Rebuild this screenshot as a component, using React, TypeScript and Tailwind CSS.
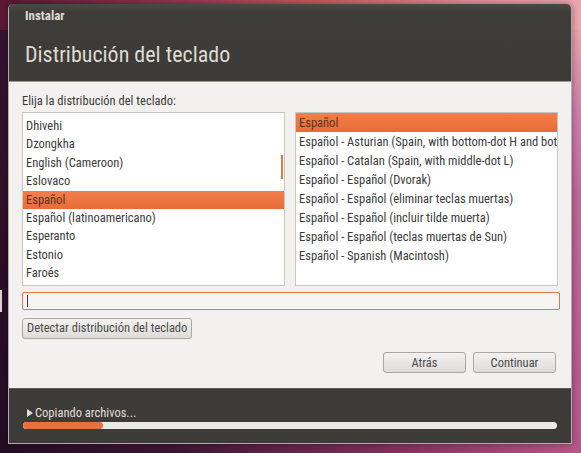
import React from "react";

const leftItems = [
  "Dhivehi",
  "Dzongkha",
  "English (Cameroon)",
  "Eslovaco",
  "Español",
  "Español (latinoamericano)",
  "Esperanto",
  "Estonio",
  "Faroés",
];

const rightItems = [
  "Español",
  "Español - Asturian (Spain, with bottom-dot H and bottom-dot L)",
  "Español - Catalan (Spain, with middle-dot L)",
  "Español - Español (Dvorak)",
  "Español - Español (eliminar teclas muertas)",
  "Español - Español (incluir tilde muerta)",
  "Español - Español (teclas muertas de Sun)",
  "Español - Spanish (Macintosh)",
];

const font = "font-['Liberation_Sans_Narrow','Roboto_Condensed','Noto_Sans',sans-serif]";

export default function App() {
  return (
    <div
      className={`relative w-[581px] h-[453px] overflow-hidden bg-[linear-gradient(75deg,#230d22_0%,#3d1634_25%,#7e2f58_55%,#b35282_80%,#c77aa2_100%)] ${font}`}
    >
      <div className="absolute inset-x-0 top-0 h-[30px] bg-[linear-gradient(90deg,#5a1833_0%,#9c3b55_35%,#c65d5c_55%,#e48c9a_80%,#eca6b0_100%)]" />
      <div className="absolute right-0 top-[30px] w-[12px] h-[160px] bg-[linear-gradient(180deg,#e8a2aa_0%,#c97aa8_60%,rgba(190,100,150,0)_100%)]" />
      <div className="absolute left-0 top-[290px] w-[2px] h-[22px] bg-[#d9cdd6]" />
      <div className="relative ml-[8px] pt-[4px] w-[564px]">
        <div className="flex flex-col h-[440px] rounded-t-[5px] overflow-hidden border-b border-x border-[#b9a8b2] shadow-[0_0_6px_rgba(0,0,0,0.4)]">
          {/* header */}
          <div className="h-[77px] shrink-0 bg-[linear-gradient(180deg,#4a4944_0%,#3d3c38_12%,#3c3b37_100%)] px-[16px] pt-[3px]">
            <div className="text-[13px] font-bold leading-[18px] text-[#dfdbd2]">Instalar</div>
            <div className="mt-[17px] text-[22px] leading-[26px] text-[#dfdbd2]">
              Distribución del teclado
            </div>
          </div>
          {/* content */}
          <div className="flex-1 bg-[#f2f1f0] px-[13px] pt-[11px] flex flex-col border-t border-[#9a9893]">
            <div className="text-[12.5px] leading-[16px] text-[#3c3c3c]">
              Elija la distribución del teclado:
            </div>
            <div className="mt-[3px] flex gap-[10px] h-[174px]">
              <div className="relative w-[264px] h-full bg-white border border-[#c8c6c3] pt-[4px] overflow-hidden">
                {leftItems.map((t) => (
                  <div
                    key={t}
                    className={`h-[18.4px] leading-[18.4px] px-[3px] text-[12.5px] whitespace-nowrap ${
                      t === "Español"
                        ? "bg-[linear-gradient(180deg,#f27e4c_0%,#e86d37_100%)] text-[#5b3322]"
                        : "text-[#3c3c3c]"
                    }`}
                  >
                    {t}
                  </div>
                ))}
                <div className="absolute right-[1px] top-[42px] w-[2px] h-[24px] bg-[#e8753f]" />
              </div>
              <div className="w-[264px] h-full bg-white border border-[#c8c6c3] overflow-hidden">
                {rightItems.map((t, i) => (
                  <div
                    key={t}
                    className={`h-[19px] leading-[19px] px-[3px] text-[12.5px] whitespace-nowrap overflow-hidden ${
                      i === 0
                        ? "bg-[linear-gradient(180deg,#f27e4c_0%,#e86d37_100%)] text-[#5b3322]"
                        : "text-[#3c3c3c]"
                    }`}
                  >
                    {t}
                  </div>
                ))}
              </div>
            </div>
            <div className="mt-[6px] h-[18px] w-[538px] border border-[#e2784a] rounded-[2px] bg-[#f6f5f4] flex items-center px-[4px]">
              <div className="w-[1px] h-[12px] bg-[#3c3c3c]" />
            </div>
            <div className="mt-[5px]">
              <button className="h-[21px] px-[4px] rounded-[3px] border border-[#aaa8a4] bg-[linear-gradient(180deg,#f3f2f1_0%,#dedcd9_100%)] text-[12.5px] text-[#4c4c4c] leading-[18px]">
                Detectar distribución del teclado
              </button>
            </div>
            <div className="mt-[13px] flex justify-end gap-[7px] pr-[2px]">
              <button className="w-[83px] h-[21px] rounded-[3px] border border-[#aaa8a4] bg-[linear-gradient(180deg,#f3f2f1_0%,#dedcd9_100%)] text-[12.5px] text-[#4c4c4c] leading-[18px]">
                Atrás
              </button>
              <button className="w-[83px] h-[21px] rounded-[3px] border border-[#aaa8a4] bg-[linear-gradient(180deg,#f3f2f1_0%,#dedcd9_100%)] text-[12.5px] text-[#4c4c4c] leading-[18px]">
                Continuar
              </button>
            </div>
          </div>
          {/* footer */}
          <div className="h-[55px] shrink-0 bg-[#3c3b37] px-[14px] pt-[16px] border-t border-[#5a5853]">
            <div className="flex items-center gap-[2px] text-[12.5px] leading-[16px] text-[#e2ded6]">
              <svg width="6" height="8" viewBox="0 0 6 8" className="ml-[4px]">
                <path d="M0 0 L6 4 L0 8 Z" fill="#e2ded6" />
              </svg>
              <span>Copiando archivos...</span>
            </div>
            <div className="mt-[1px] h-[7px] w-[534px] rounded-full bg-[#ebe9e4] overflow-hidden">
              <div className="h-full rounded-full bg-[#e8703c]" style={{ width: "15%" }} />
            </div>
          </div>
        </div>
      </div>
    </div>
  );
}
